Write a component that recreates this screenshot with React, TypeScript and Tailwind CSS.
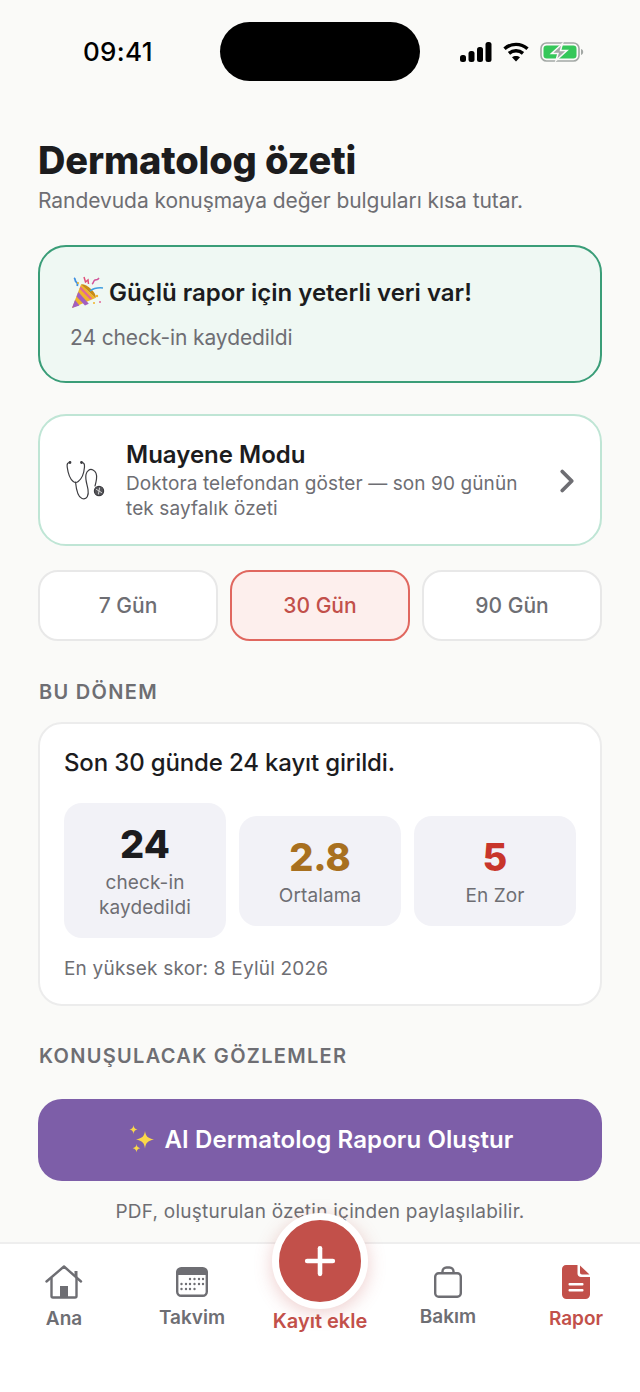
import { ChevronRight, Plus } from 'lucide-react'

function StatusIcons() {
  return (
    <div className="flex items-center gap-[11px]">
      <svg width="32" height="20" viewBox="0 0 32 20" fill="#000">
        <rect x="0" y="13" width="6" height="7" rx="2.5" />
        <rect x="8.5" y="9" width="6" height="11" rx="2.5" />
        <rect x="17" y="5" width="6" height="15" rx="2.5" />
        <rect x="25.5" y="0" width="6" height="20" rx="2.5" />
      </svg>
      <svg width="26" height="20" viewBox="0 0 26 20" fill="none" stroke="#000" strokeWidth="3.4">
        <path d="M1.5 6.8C8 .9 18 .9 24.5 6.8" />
        <path d="M6 11.4c4-3.5 10-3.5 14 0" />
        <path d="M13 19.5l-4-4.2c2.200-1.900 5.800-1.900 8 0z" fill="#000" stroke="none" />
      </svg>
      <svg width="44" height="20" viewBox="0 0 44 20">
        <rect x="1" y="1" width="38" height="18" rx="5.500" fill="none" stroke="#a3a8a5" strokeWidth="1.600" />
        <rect x="3.500" y="3.500" width="33" height="13" rx="3.200" fill="#35c759" />
        <path d="M41 7v6c1.500-.4 2.200-1.600 2.200-3S42.500 7.400 41 7z" fill="#a3a8a5" />
        <path d="M22.500 1.500L11.500 11.500h6.500l-2 7 11-10h-6.500z" fill="#a3a8a5" stroke="#fafaf8" strokeWidth="1.500" />
      </svg>
    </div>
  )
}

function PartyPopper() {
  return (
    <svg width="34" height="34" viewBox="0 0 34 34">
      <path d="M2 32L11 8.500 25.500 22z" fill="#f0b429" />
      <path d="M2 32l3-8 4.500 5.500z" fill="#a25fc0" />
      <path d="M6.500 20.500l8.500 9 3.800-1.800L8.300 16z" fill="#a25fc0" />
      <path d="M9.500 12.500l10.500 11 2.200-1.100-11.500-12z" fill="#e0689a" />
      <path d="M11 8.500L25.500 22c1-1.700-1-5.700-4.500-9S12.500 7.500 11 8.500z" fill="#c98a14" />
      <path d="M4 2c2 1 .5 3 2.200 4s1.500 2.500 1 4" fill="none" stroke="#3f8fe0" strokeWidth="1.800" />
      <path d="M14 1l1.500 5 2.500-2 .5 4" fill="none" stroke="#e0507a" strokeWidth="1.500" />
      <path d="M22 8c2-1 1-3 3-4s2 1 4-2" fill="none" stroke="#d0559a" strokeWidth="1.500" />
      <path d="M20 15c4-3 8-3.500 13-3" fill="none" stroke="#3f9ee0" strokeWidth="1.500" />
      <circle cx="27" cy="20" r="1.200" fill="#f0b429" />
      <circle cx="30" cy="26" r="1" fill="#e0689a" />
      <circle cx="24" cy="27" r="1" fill="#f0b429" />
      <circle cx="8" cy="7" r="1" fill="#f0b429" />
    </svg>
  )
}

function Stethoscope() {
  return (
    <svg width="40" height="42" viewBox="0 0 40 42" fill="none" stroke="#3c3c40" strokeWidth="1.200" strokeLinecap="round" className="mt-[2px] shrink-0">
      <path d="M4 1.500C1.500 1.500 .8 3 1.200 6c.8 6 2.800 12 6 14.500 1.500 1.200 3.500 1.200 5 0C15.500 18 18 12 18.500 6c.2-3-.6-4.500-3-4.500" />
      <path d="M9.500 21c.5 5 1.500 15 6.500 16.500 5 1.500 7-3 6-9-1-6-3-10-2-15 .8-4 4-6 7-4.500 3 1.500 4 5 3.500 9-.3 2.500-1 5-1.500 7" />
      <circle cx="33" cy="30" r="4.600" fill="#55555a" stroke="#3c3c40" />
      <path d="M30.500 28.500l5 3M33.500 27l-1 6" stroke="#d8d8d8" strokeWidth="1" />
      <circle cx="4" cy="1.500" r=".8" fill="#3c3c40" />
      <circle cx="15.500" cy="1.500" r=".8" fill="#3c3c40" />
    </svg>
  )
}

function Sparkles() {
  return (
    <svg width="30" height="30" viewBox="0 0 30 30" fill="#fbd84a">
      <path d="M18 6c.7 5 2.500 7.300 9 8.500-6.500 1.200-8.300 3.500-9 9-.7-5.500-2.500-7.800-9-9 6.500-1.200 8.300-3.500 9-8.500z" />
      <path d="M6.500 0c.3 2.800 1.200 3.800 4 4.500-2.800.7-3.700 1.700-4 4.500-.3-2.800-1.200-3.800-4-4.500 2.800-.7 3.700-1.700 4-4.500z" />
      <path d="M9.500 19c.3 2.600 1.100 3.500 3.800 4.200-2.700.7-3.500 1.600-3.800 4.300-.3-2.700-1.100-3.600-3.800-4.300 2.700-.7 3.500-1.600 3.800-4.200z" />
    </svg>
  )
}

function NavIcon({ name }: { name: string }) {
  if (name === 'Ana') {
    return (
      <svg width="38" height="34" viewBox="0 0 38 34" fill="none" stroke="#6e6e73" strokeWidth="2.400" strokeLinejoin="round">
        <path d="M1.500 16.500L19 1.500l17 15" strokeLinecap="round" />
        <path d="M31 6v6" strokeWidth="3" />
        <path d="M6.500 13v18a1.500 1.500 0 0 0 1.500 1.500h22a1.500 1.500 0 0 0 1.500-1.500V13" />
        <rect x="15" y="21" width="8" height="11" fill="#6e6e73" stroke="none" />
      </svg>
    )
  }
  if (name === 'Takvim') {
    return (
      <svg width="32" height="30" viewBox="0 0 32 30">
        <rect x="1.200" y="1.200" width="29.600" height="27.600" rx="4" fill="#fff" stroke="#6e6e73" strokeWidth="2.400" />
        <path d="M1 5a4 4 0 0 1 4-4h22a4 4 0 0 1 4 4v3H1z" fill="#6e6e73" />
        {[
          [14, 12], [18.500, 12], [23, 12], [27, 12],
          [5.500, 17], [10, 17], [14, 17], [18.500, 17], [23, 17], [27, 17],
          [5.500, 22], [10, 22], [14, 22], [18.500, 22],
        ].map(([cx, cy]) => (
          <circle key={`${cx}-${cy}`} cx={cx} cy={cy} r="1.200" fill="#6e6e73" />
        ))}
      </svg>
    )
  }
  if (name === 'Bakım') {
    return (
      <svg width="28" height="32" viewBox="0 0 28 32" fill="none" stroke="#6e6e73" strokeWidth="2.400">
        <rect x="1.200" y="7.200" width="25.600" height="23.600" rx="3.500" />
        <path d="M8.500 7.200V5.500a4 4 0 0 1 4-4h3a4 4 0 0 1 4 4v1.700" />
      </svg>
    )
  }
  return (
    <svg width="28" height="34" viewBox="0 0 28 34">
      <path d="M4 0h11.500v8.500c0 2 1.500 3.500 3.500 3.500h9v17.500c0 2.500-2 4.500-4.500 4.500H4.500C2 34 0 32 0 29.500V4C0 1.800 1.800 0 4 0z" fill="#c2504a" />
      <path d="M18 .5L27.500 9.500H20c-1.200 0-2-.9-2-2z" fill="#c2504a" />
      <rect x="6.500" y="18" width="15" height="2.400" rx="1" fill="#fff" />
      <rect x="6.500" y="24" width="15" height="2.400" rx="1" fill="#fff" />
    </svg>
  )
}

function Stat({ value, label, color }: { value: string; label: string; color: string }) {
  return (
    <div className="flex flex-1 flex-col items-center rounded-[18px] bg-[#f2f2f7] pt-[19px] pb-[18px]">
      <div className={`text-[38px] leading-[44px] font-extrabold ${color}`}>{value}</div>
      <div className="mt-[4px] text-center text-[19px] leading-[25px] tracking-[0.1px] text-[#6e6e73]">{label}</div>
    </div>
  )
}

function NavItem({ name, active, mt, labelMt }: { name: string; active?: boolean; mt: string; labelMt: string }) {
  return (
    <div className={`flex w-[128px] flex-col items-center ${mt}`}>
      <div className="flex h-[34px] items-end justify-center">
        <NavIcon name={name} />
      </div>
      <span className={`text-[19px] leading-[24px] font-semibold ${labelMt} ${active ? 'text-[#c2504a]' : 'text-[#6e6e73]'}`}>{name}</span>
    </div>
  )
}

export default function App() {
  return (
    <div className="relative flex h-[1392px] w-[640px] flex-col overflow-hidden bg-[#fafaf8] font-['Inter',sans-serif]">
      <div className="flex h-[104px] shrink-0 items-start pt-[22px]">
        <div className="w-[220px] pl-[83px]">
          <span className="mt-[13px] block text-[26px] leading-[34px] font-medium tracking-[0.3px] text-black">09:41</span>
        </div>
        <div className="h-[59px] w-[200px] rounded-[30px] bg-black" />
        <div className="mt-[20px] flex flex-1 justify-end pr-[56px]">
          <StatusIcons />
        </div>
      </div>

      <div className="flex min-h-0 flex-1 flex-col overflow-hidden px-[38px]">
        <h1 className="mt-[32px] text-[38px] leading-[48px] font-extrabold tracking-[-0.15px] text-[#1c1c1e]">Dermatolog özeti</h1>
        <p className="mt-[3px] text-[21px] leading-[28px] tracking-[-0.06px] text-[#6e6e73]">Randevuda konuşmaya değer bulguları kısa tutar.</p>

        <div className="mt-[30px] rounded-[28px] border-2 border-[#3a9d78] bg-[#eff8f3] px-[30px] pt-[29px] pb-[29px]">
          <div className="flex items-center gap-[5px]">
            <PartyPopper />
            <span className="text-[24px] leading-[34px] font-semibold text-[#1c1c1e]">Güçlü rapor için yeterli veri var!</span>
          </div>
          <p className="mt-[14px] text-[21px] leading-[28px] tracking-[-0.1px] text-[#6e6e73]">24 check-in kaydedildi</p>
        </div>

        <div className="mt-[31px] flex items-center rounded-[28px] border-2 border-[#bfe5d5] bg-white pt-[25px] pr-[14px] pb-[23px] pl-[26px]">
          <Stethoscope />
          <div className="ml-[20px] min-w-0 flex-1">
            <div className="text-[24px] leading-[28px] font-semibold text-[#1c1c1e]">Muayene Modu</div>
            <p className="mt-[2px] text-[19px] leading-[25px] tracking-[0.1px] text-[#6e6e73]">Doktora telefondan göster — son 90 günün tek sayfalık özeti</p>
          </div>
          <ChevronRight size={38} strokeWidth={2.400} className="ml-[5px] shrink-0 text-[#6e6e73]" />
        </div>

        <div className="mt-[24px] flex gap-[12px]">
          <div className="flex h-[71px] flex-1 items-center justify-center rounded-[20px] border-2 border-[#e8e8e8] bg-white text-[21px] font-medium text-[#6e6e73]">7 Gün</div>
          <div className="flex h-[71px] flex-1 items-center justify-center rounded-[20px] border-2 border-[#e0675f] bg-[#fdefed] text-[21px] font-medium text-[#c2504a]">30 Gün</div>
          <div className="flex h-[71px] flex-1 items-center justify-center rounded-[20px] border-2 border-[#e8e8e8] bg-white text-[21px] font-medium text-[#6e6e73]">90 Gün</div>
        </div>

        <div className="mt-[38px] pl-[1px] text-[20px] leading-[26px] font-semibold tracking-[1.300px] text-[#6e6e73]">BU DÖNEM</div>

        <div className="mt-[17px] rounded-[24px] border-2 border-[#ececec] bg-white px-[24px] pt-[22px] pb-[22px]">
          <div className="text-[24px] leading-[34px] font-medium tracking-[-0.15px] text-[#1c1c1e]">Son 30 günde 24 kayıt girildi.</div>
          <div className="mt-[23px] flex items-center gap-[13px]">
            <Stat value="24" label="check-in kaydedildi" color="text-[#1c1c1e]" />
            <Stat value="2.8" label="Ortalama" color="text-[#a8701f]" />
            <Stat value="5" label="En Zor" color="text-[#c8352b]" />
          </div>
          <p className="mt-[18px] text-[19px] leading-[26px] tracking-[0.2px] text-[#6e6e73]">En yüksek skor: 8 Eylül 2026</p>
        </div>

        <div className="mt-[37px] pl-[1px] text-[20px] leading-[26px] font-semibold tracking-[1.300px] text-[#6e6e73]">KONUŞULACAK GÖZLEMLER</div>

        <div className="mt-[30px] flex h-[82px] shrink-0 items-center justify-center gap-[8px] rounded-[24px] bg-[#7d5ea8]">
          <Sparkles />
          <span className="text-[24px] font-semibold tracking-[0.1px] text-white">AI Dermatolog Raporu Oluştur</span>
        </div>

        <p className="mt-[18px] text-center text-[19px] leading-[26px] tracking-[0.25px] text-[#6e6e73]">PDF, oluşturulan özetin içinden paylaşılabilir.</p>
      </div>

      <div className="flex h-[150px] shrink-0 justify-between border-t-2 border-[#eeeeee] bg-white">
        <NavItem name="Ana" mt="mt-[21px]" labelMt="mt-[8px]" />
        <NavItem name="Takvim" mt="mt-[19px]" labelMt="mt-[9px]" />
        <div className="w-[128px]" />
        <NavItem name="Bakım" mt="mt-[20px]" labelMt="mt-[7px]" />
        <NavItem name="Rapor" active mt="mt-[21px]" labelMt="mt-[8px]" />
      </div>

      <div className="absolute top-[1213px] left-[272px] flex w-[96px] flex-col items-center">
        <div className="flex h-[96px] w-[96px] items-center justify-center rounded-full border-[7px] border-white bg-[#c2504a] shadow-[0_4px_18px_rgba(194,80,74,0.28)]">
          <Plus size={44} strokeWidth={2.500} className="text-white" />
        </div>
        <span className="text-[20px] leading-[24px] font-semibold whitespace-nowrap text-[#c2504a]">Kayıt ekle</span>
      </div>
    </div>
  )
}
